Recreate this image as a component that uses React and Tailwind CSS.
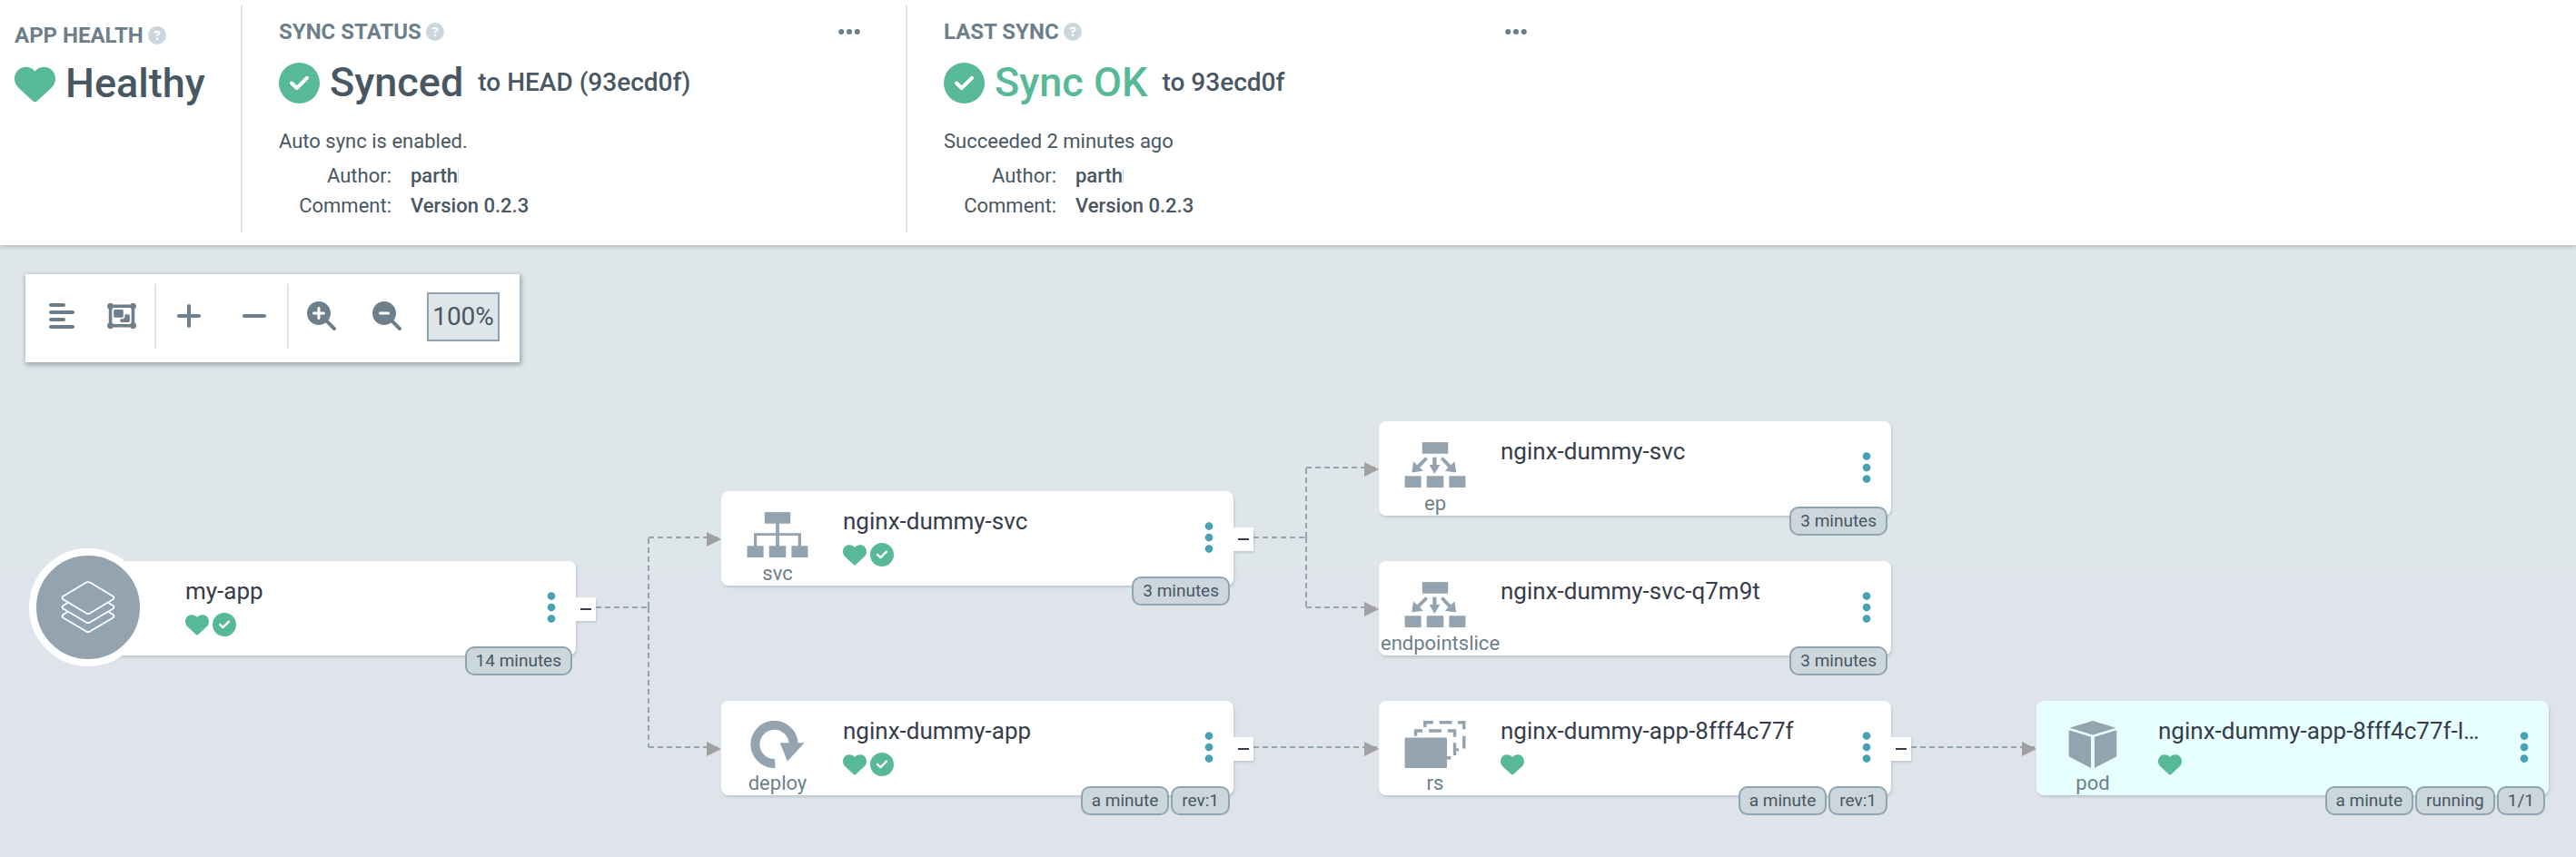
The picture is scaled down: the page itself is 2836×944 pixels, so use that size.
import React from "react";
import {
  FaAlignLeft,
  FaCircleCheck,
  FaCircleQuestion,
  FaEllipsis,
  FaEllipsisVertical,
  FaHeart,
  FaMagnifyingGlassMinus,
  FaMagnifyingGlassPlus,
  FaMinus,
  FaObjectGroup,
  FaPlus,
} from "react-icons/fa6";

/* ---------- Resource kind icons ---------- */

function ServiceIcon() {
  return (
    <svg viewBox="0 0 72 56" className="h-14 w-[72px] fill-current" aria-hidden="true">
      <rect x="20.7" y="1.2" width="30.6" height="13.6" />
      <rect x="34" y="14" width="4" height="28" />
      <path d="M9 26.2h54a1 1 0 0 1 1 1V42h-3.6V29.2H11.4V42H8V27.2a1 1 0 0 1 1-1z" />
      <rect x="0" y="41.2" width="19.4" height="13.8" />
      <rect x="26" y="41.2" width="20" height="13.8" />
      <rect x="52.6" y="41.2" width="19.4" height="13.8" />
    </svg>
  );
}

function EndpointIcon() {
  return (
    <svg viewBox="0 0 72 56" className="h-14 w-[72px] fill-current" aria-hidden="true">
      <rect x="20.7" y="1.2" width="30.6" height="13.6" />
      <path d="M33 19h4.6v9h4.2L35.2 38.8 29 28h4z" />
      <path d="M24.6 18.6l2.8 2.8-9.6 9.8 4 4.1L8.3 37.2 10.2 23.9l4.4 4.3z" />
      <path d="M45.2 18.6l-2.8 2.8 9.2 9.8-4 4.1 13.3 1.9-1.9-13.3-4.2 4.3z" />
      <rect x="0" y="41.2" width="19.4" height="13.8" />
      <rect x="26" y="41.2" width="20" height="13.8" />
      <rect x="52.6" y="41.2" width="19.4" height="13.8" />
    </svg>
  );
}

function DeployIcon() {
  return (
    <svg viewBox="0 0 72 56" className="h-14 w-[72px]" aria-hidden="true">
      <path
        d="M33 50.6A22.7 22.7 0 1 1 54.9 27"
        fill="none"
        stroke="currentColor"
        strokeWidth="10.8"
      />
      <path d="M38.9 26h29L47.8 47.8z" fill="currentColor" />
    </svg>
  );
}

function ReplicaSetIcon() {
  return (
    <svg viewBox="0 0 72 56" className="h-14 w-[72px]" aria-hidden="true">
      <g fill="none" stroke="currentColor" strokeWidth="3.7">
        <path d="M23.9 7.5V1.9h9.8M41 1.9h15M63 1.9h7.2V10M70.2 18v14.8M61 34.3h3" />
        <path d="M12.9 18v-6.2H21M28.5 11.8h15M51 11.8h8.2v7.4M59.2 26v14.8M50 43.9h4.8" />
      </g>
      <rect x="0" y="20" width="50" height="36" rx="1" fill="currentColor" />
    </svg>
  );
}

function PodIcon() {
  return (
    <svg viewBox="0 0 72 56" className="h-14 w-[72px] fill-current" aria-hidden="true">
      <path d="M36 0l27.4 8.3L36 16.6 8.5 8.3z" />
      <path d="M7.6 11l26.3 8v37L7.6 42.3z" />
      <path d="M64.3 11L38 19v37l26.3-13.7z" />
    </svg>
  );
}

function LayersIcon() {
  return (
    <svg
      viewBox="0 0 60 58"
      className="h-[58px] w-[60px]"
      fill="none"
      stroke="white"
      strokeWidth="1.8"
      strokeLinejoin="round"
      aria-hidden="true"
    >
      <path d="M28 1.6Q30 .6 32 1.6L57 16.6Q60 18.6 57 20.6L32 35.6Q30 36.6 28 35.6L3 20.6Q0 18.6 3 16.6z" />
      <path d="M8 23.8L3 26.8Q0 28.8 3 30.8L28 45.6Q30 46.6 32 45.6L57 30.8Q60 28.8 57 26.8L52 23.8" />
      <path d="M8 33.8L3 36.8Q0 38.8 3 40.8L28 55.6Q30 56.6 32 55.6L57 40.8Q60 38.8 57 36.8L52 33.8" />
    </svg>
  );
}

/* ---------- Status panels ---------- */

function PanelLabel({ children }) {
  return (
    <h2 className="flex items-center gap-[5px] text-[24px]/[28px] font-bold text-[#6d7f8b]">
      {children}
      <button type="button" aria-label={`About ${children}`}>
        <FaCircleQuestion className="size-5 text-[#ccd6dd]" />
      </button>
    </h2>
  );
}

function SyncPanel({ label, title, titleClass, revision, message, divider }) {
  return (
    <section
      className={`w-[732px] pt-[15px] pr-12 pl-10 ${divider ? "border-r-2 border-[#dee6e9]" : ""}`}
    >
      <div className="flex items-start justify-between">
        <PanelLabel>{label}</PanelLabel>
        <button type="button" aria-label={`${label} options`} className="text-[#6d7f8b]">
          <FaEllipsis className="size-7" />
        </button>
      </div>
      <div className="mt-4 flex items-center">
        <FaCircleCheck className="size-[45px] text-[#58b996]" />
        <span className={`ml-[11px] text-[45px]/[52px] font-medium ${titleClass}`}>{title}</span>
        <span className="ml-4 text-[28px]/[32px] font-medium">{revision}</span>
      </div>
      <p className="mt-[22px] text-[22px]/[33px]">{message}</p>
      <dl className="mt-[5px] grid grid-cols-[124px_1fr] gap-x-[21px] text-[22px]/[33px]">
        <dt className="text-right">Author:</dt>
        <dd className="flex items-center font-medium">
          parth
          <span className="h-4 w-px bg-[#ccd6dd]" />
        </dd>
        <dt className="text-right">Comment:</dt>
        <dd className="font-medium">Version 0.2.3</dd>
      </dl>
    </section>
  );
}

function StatusBar() {
  return (
    <header className="relative z-10 flex bg-white pt-1.5 pb-3.5 shadow-[0_1px_6px_rgba(0,0,0,0.25)]">
      <section className="w-[267px] border-r-2 border-[#dee6e9] pt-[19px] pl-4">
        <PanelLabel>APP HEALTH</PanelLabel>
        <div className="mt-[13px] flex items-center gap-[11px]">
          <FaHeart className="size-[45px] text-[#58b996]" />
          <span className="text-[45px]/[52px] font-medium">Healthy</span>
        </div>
      </section>
      <SyncPanel
        label="SYNC STATUS"
        title="Synced"
        titleClass="text-[#495763]"
        revision="to HEAD (93ecd0f)"
        message="Auto sync is enabled."
        divider
      />
      <SyncPanel
        label="LAST SYNC"
        title="Sync OK"
        titleClass="text-[#58b996]"
        revision="to 93ecd0f"
        message="Succeeded 2 minutes ago"
      />
      <div className="h-[250px]" />
    </header>
  );
}

/* ---------- Toolbar ---------- */

function ToolButton({ label, icon: Icon, narrow }) {
  return (
    <button
      type="button"
      aria-label={label}
      className={`flex h-[70px] items-center justify-center ${narrow ? "w-[66px]" : "w-[72px]"}`}
    >
      <Icon className="size-8" />
    </button>
  );
}

function Toolbar() {
  return (
    <div className="relative inline-flex bg-white pt-[11px] pr-[22px] pb-[15px] pl-[7px] text-[#6d7f8b] shadow-[1px_2px_5px_1px_rgba(109,127,139,0.6)]">
      <div className="flex h-[71px] items-start">
        <ToolButton label="Compact view" icon={FaAlignLeft} narrow />
        <ToolButton label="Group nodes" icon={FaObjectGroup} narrow />
        <div className="ml-[3px] h-full w-0.5 bg-[#dee6e9]" />
        <ToolButton label="Expand all" icon={FaPlus} />
        <ToolButton label="Collapse all" icon={FaMinus} />
        <div className="h-full w-0.5 bg-[#dee6e9]" />
        <ToolButton label="Zoom in" icon={FaMagnifyingGlassPlus} />
        <ToolButton label="Zoom out" icon={FaMagnifyingGlassMinus} />
        <input
          type="text"
          aria-label="Zoom level"
          defaultValue="100%"
          className="ml-2 h-[54px] w-20 self-center border-2 border-[#8fa4b1] bg-[#dee6e9] text-center text-[28px]/[32px] text-[#495763]"
        />
      </div>
    </div>
  );
}

/* ---------- Resource tree ---------- */

const NODES = [
  { place: "left-[70px] top-[348px]", root: true, name: "my-app", health: true, synced: true, badges: ["14 minutes"], open: true },
  { place: "left-[794px] top-[271px]", icon: ServiceIcon, kind: "svc", name: "nginx-dummy-svc", health: true, synced: true, badges: ["3 minutes"], open: true },
  { place: "left-[794px] top-[502px]", icon: DeployIcon, kind: "deploy", name: "nginx-dummy-app", health: true, synced: true, badges: ["a minute", "rev:1"], open: true },
  { place: "left-[1518px] top-[194px]", icon: EndpointIcon, kind: "ep", name: "nginx-dummy-svc", badges: ["3 minutes"] },
  { place: "left-[1518px] top-[348px]", icon: EndpointIcon, kind: "endpointslice", name: "nginx-dummy-svc-q7m9t", badges: ["3 minutes"] },
  { place: "left-[1518px] top-[502px]", icon: ReplicaSetIcon, kind: "rs", name: "nginx-dummy-app-8fff4c77f", health: true, badges: ["a minute", "rev:1"], open: true },
  { place: "left-[2242px] top-[502px]", icon: PodIcon, kind: "pod", name: "nginx-dummy-app-8fff4c77f-l…", health: true, badges: ["a minute", "running", "1/1"], selected: true },
];

function Node({ node }) {
  const Icon = node.icon;
  return (
    <article
      className={`absolute flex h-[104px] w-[564px] rounded-lg shadow-[1px_2px_3px_rgba(109,127,139,0.3)] ${node.place} ${node.selected ? "bg-[#e6fffe]" : "bg-white"}`}
    >
      {node.root ? (
        <div className="w-[134px]">
          <div className="absolute -top-3.5 -left-[38px] flex size-[130px] items-center justify-center rounded-full border-8 border-white bg-[#93a3b0]">
            <LayersIcon />
          </div>
        </div>
      ) : (
        <div className="mr-2.5 flex w-[124px] flex-col items-center pt-[22px] text-[#93a3b0]">
          <Icon />
          <span className="mt-1 w-[120px] text-center text-[22px]/[26px] whitespace-nowrap text-[#6d7f8b]">
            {node.kind}
          </span>
        </div>
      )}
      <div className="min-w-0 flex-1 pt-[17px]">
        <h3 className="truncate text-[26px]/[32px] text-[#363c4a]">{node.name}</h3>
        <div className="mt-2 flex gap-1 text-[#58b996]">
          {node.health && <FaHeart className="size-[26px]" />}
          {node.synced && <FaCircleCheck className="size-[26px]" />}
        </div>
      </div>
      <button
        type="button"
        aria-label={`${node.name} actions`}
        className="mr-[7px] h-[102px] text-[#47a0b3]"
      >
        <FaEllipsisVertical className="size-10" />
      </button>
      {node.open && (
        <button
          type="button"
          aria-label={`Collapse ${node.name}`}
          className="absolute top-10 left-full flex h-[26px] w-[22px] items-center justify-center bg-white shadow-[1px_2px_2px_rgba(109,127,139,0.25)]"
        >
          <svg viewBox="0 0 12 2" className="h-0.5 w-3" aria-hidden="true">
            <rect width="12" height="2" fill="#363c4a" />
          </svg>
        </button>
      )}
      <ul className="absolute right-1 -bottom-[22px] flex gap-0.5">
        {node.badges.map((badge) => (
          <li
            key={badge}
            className="rounded-[10px] border-2 border-[#8fa4b1] bg-[#ccd6dd] px-2.5 text-[19px]/[28px] whitespace-nowrap text-[#495763]"
          >
            {badge}
          </li>
        ))}
      </ul>
    </article>
  );
}

const EDGES = [
  "M656 399H714",
  "M714 399V322",
  "M714 399V553",
  "M714 322H794",
  "M714 553H794",
  "M1380 322H1438",
  "M1438 322V245",
  "M1438 322V399",
  "M1438 245H1518",
  "M1438 399H1518",
  "M1380 553H1518",
  "M2104 553H2242",
];

const ARROWS = [
  "M778 316v16l16-8z",
  "M778 547v16l16-8z",
  "M1502 239v16l16-8z",
  "M1502 393v16l16-8z",
  "M1502 547v16l16-8z",
  "M2226 547v16l16-8z",
];

function Edges() {
  return (
    <svg className="absolute inset-0 size-full" aria-hidden="true">
      {EDGES.map((d) => (
        <path key={d} d={d} fill="none" stroke="#93a4b1" strokeWidth="2" strokeDasharray="6 4" />
      ))}
      {ARROWS.map((d) => (
        <path key={d} d={d} fill="#a0a0a0" />
      ))}
    </svg>
  );
}

export default function App() {
  return (
    <div className="flex min-h-screen flex-col font-[Roboto,'Liberation_Sans',sans-serif] text-[#495763]">
      <StatusBar />
      <main className="relative flex-1 overflow-hidden bg-linear-to-b from-[#dee6e9] from-52% to-[#dfe4eb] to-54% px-7 pt-8">
        <Edges />
        <Toolbar />
        {NODES.map((node) => (
          <Node key={node.place} node={node} />
        ))}
      </main>
    </div>
  );
}
